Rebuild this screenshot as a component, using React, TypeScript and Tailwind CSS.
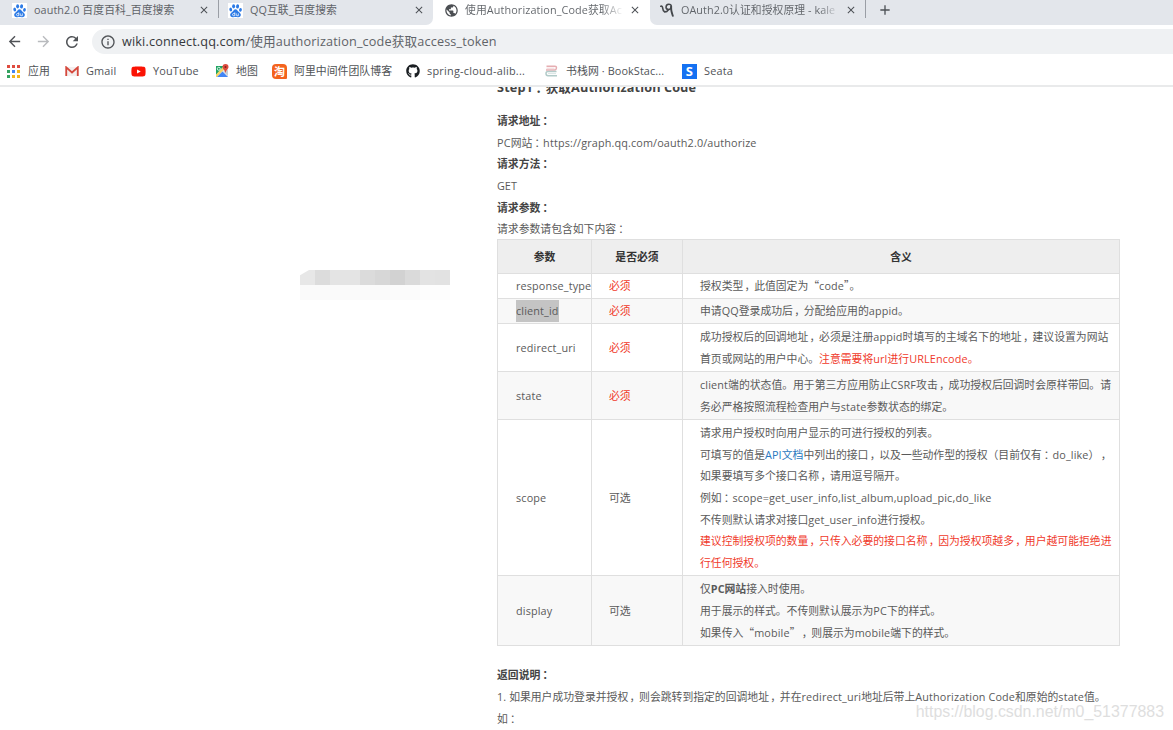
import React from "react";
import { FaGithub, FaYoutube } from "react-icons/fa";
import { MdPublic, MdArrowBack, MdArrowForward, MdRefresh, MdInfoOutline, MdClose, MdAdd } from "react-icons/md";

/*
 * Mixed Chinese and Latin text: full-width colons and commas sit nearer the
 * middle of their em box, curly quotes are full-width, Latin runs are set a little wider.
 */
function T({ children }: { children: string }) {
  return (
    <>
      {children.split(/([：，“”]|[\x21-\x7e]+)/).map((part, i) => {
        if (part === "：") return <span key={i} className="inline-block w-[1em] indent-[0.2em]">{part}</span>;
        if (part === "，") return <span key={i} className="inline-block w-[1em] indent-[0.12em]">{part}</span>;
        if (part === "“" || part === "”") return <span key={i} className="font-['Noto_Sans_CJK_SC',sans-serif]">{part}</span>;
        if (/^[\x21-\x7e]+$/.test(part)) return <span key={i} className="tracking-[0.14px]">{part}</span>;
        return part;
      })}
    </>
  );
}

function TabDivider() {
  return <div className="h-[18px] w-px shrink-0 bg-[#9a9ea5]" />;
}

function Close() {
  return <MdClose className="size-[12px] shrink-0 text-[#4d5156]" />;
}

function PawIcon() {
  return (
    <svg viewBox="0 0 16 16" className="size-[15px] bg-white" fill="#2d7be6">
      <ellipse cx="6" cy="3.500" rx="1.600" ry="2.300" />
      <ellipse cx="10.200" cy="3.600" rx="1.600" ry="2.300" transform="rotate(10 10.200 3.600)" />
      <ellipse cx="2.900" cy="7" rx="1.500" ry="2.100" transform="rotate(-12 2.900 7)" />
      <ellipse cx="13.300" cy="7.300" rx="1.500" ry="2.100" transform="rotate(10 13.300 7.300)" />
      <path d="M8 6.600c1.500 0 2 1.200 3 2.400s2.900 2.100 2.700 3.900c-.2 1.900-1.900 2.400-3.300 2.200-1.600-.3-3.200-.3-4.800 0-1.400.2-3.100-.3-3.300-2.200-.2-1.800 1.700-2.700 2.700-3.900s1.500-2.400 3-2.400z" />
      <path d="M7.200 10v3.600H6q-1.200-.1-1.200-1.200t1.200-1.200h1.200M8.800 11.100v1.900q0 .6.700.6h1.500v-2.500" fill="none" stroke="#fff" strokeWidth=".8" />
    </svg>
  );
}

function GmailIcon() {
  return (
    <svg viewBox="0 0 15 12" className="h-[11px] w-[14px]">
      <path d="M1 1h13v10H1z" fill="#f3eeee" />
      <path d="M1.200 11V1.500L7.500 7l6.300-5.500V11" fill="none" stroke="#d5493d" strokeWidth="2" />
    </svg>
  );
}

function MapsIcon() {
  return (
    <svg viewBox="0 0 14 14" className="size-[14px]">
      <path d="M1 2h12v11H1z" fill="#e8eaed" />
      <path d="M1 2h8L1 11z" fill="#1fa463" />
      <path d="M1 10.500 8.500 2.500 9.500 5 2 13H1z" fill="#f5d565" />
      <path d="M2 13l5.500-5.500L13 13z" fill="#4285f4" />
      <path d="M8.500 7.500 13 12V6z" fill="#c8ccd1" />
      <path d="M10.500 0a3 3 0 0 0-3 3c0 2 2.300 2.700 3 6 .7-3.300 3-4 3-6a3 3 0 0 0-3-3z" fill="#dd4b3e" />
      <circle cx="10.500" cy="3" r="1" fill="#7e2318" />
      <circle cx="3.800" cy="4.800" r="1.500" fill="none" stroke="#fff" strokeWidth=".8" />
    </svg>
  );
}

function TaoIcon() {
  return (
    <span className="flex size-[15px] items-center justify-center rounded-[4px] rounded-br-[1px] bg-[#f4631e] text-[11px] leading-none font-bold text-white">
      淘
    </span>
  );
}

function BookIcon() {
  return (
    <svg viewBox="0 0 13 12" className="h-[12px] w-[13px]" fill="none">
      <path d="M1.500 1.300h8.500q1.500 0 1.500 1.500T10 5H1" stroke="#e6aeb2" strokeWidth="1.500" />
      <path d="M1.500 3.200h8" stroke="#f1d3d5" />
      <path d="M11.500 6.500H3Q1 6.500 1 8.600t2 2.100h9" stroke="#b2cbc9" strokeWidth="1.500" />
      <path d="M3 8.600h8" stroke="#d9e5e4" />
    </svg>
  );
}

function ScriptIcon() {
  return (
    <svg viewBox="0 0 14 14" className="size-[14px]" fill="none" stroke="#44474b" strokeLinecap="round">
      <path d="M.8 3.200q1.700-.4 1.900 2T4.600 8.900Q7 9 8.300 6.800" strokeWidth="1.600" />
      <path d="M6 4.500Q6 1.200 8.700 1.200t2.500 2.600Q11 6.500 8.700 6.500T6 4.500" strokeWidth="1.500" />
      <path d="M11.200 3.500q-.2 3 .4 5.300t1.200 4" strokeWidth="1.900" />
    </svg>
  );
}

function AppsIcon() {
  const colors = [
    "bg-[#df4b3f]", "bg-[#df4b3f]", "bg-[#df4b3f]",
    "bg-[#34a360]", "bg-[#4285f4]", "bg-[#f2b51d]",
    "bg-[#34a360]", "bg-[#f2b51d]", "bg-[#f2b51d]",
  ];
  return (
    <div className="grid w-[13px] grid-cols-3 gap-[2px]">
      {colors.map((c, i) => (
        <span key={i} className={`size-[3px] ${c}`} />
      ))}
    </div>
  );
}

function Bookmark({ icon, label, className }: { icon: React.ReactNode; label: string; className: string }) {
  return (
    <div className={`flex h-full shrink-0 items-center whitespace-nowrap ${className}`}>
      <div className="flex w-[15px] shrink-0 justify-center">{icon}</div>
      <span>{label}</span>
    </div>
  );
}

function Browser() {
  return (
    <header className="shrink-0">
      <div className="flex h-[25px] bg-white text-[10.83px] text-[#5f6368]">
        <div className="flex h-full w-[433px] shrink-0 items-start rounded-br-[7px] bg-[#e3e6eb]">
          <div className="flex h-[20px] w-[218px] items-center pl-[12px]">
            <PawIcon />
            <span className="ml-[7px] w-[164px] tracking-[0.07px] whitespace-nowrap">oauth2.0 百度百科_百度搜索</span>
            <Close />
          </div>
          <TabDivider />
          <div className="flex h-[20px] flex-1 items-center pl-[9px]">
            <PawIcon />
            <span className="ml-[7px] w-[163px] tracking-[0.04px] whitespace-nowrap">QQ互联_百度搜索</span>
            <Close />
          </div>
        </div>
        <div className="flex h-[20px] w-[217px] shrink-0 items-center pl-[11px]">
          <MdPublic className="size-[15px] shrink-0 text-[#4b4e52]" />
          <span className="ml-[6px] w-[159px] overflow-hidden bg-linear-to-r from-[#5f6368] from-85% to-transparent bg-clip-text tracking-[0.1px] whitespace-nowrap text-transparent">
            使用Authorization_Code获取Ac
          </span>
          <span className="ml-[5px]"><Close /></span>
        </div>
        <div className="flex h-full flex-1 items-start rounded-bl-[7px] bg-[#e3e6eb]">
          <div className="flex h-[20px] w-[215px] items-center pl-[10px]">
            <ScriptIcon />
            <span className="ml-[7px] w-[158px] overflow-hidden bg-linear-to-r from-[#5f6368] from-88% to-transparent bg-clip-text tracking-[0.05px] whitespace-nowrap text-transparent">
              OAuth2.0认证和授权原理 - kale
            </span>
            <span className="ml-[6px]"><Close /></span>
          </div>
          <TabDivider />
          <div className="flex h-[20px] items-center pl-[11px]">
            <MdAdd className="size-[16px] text-[#4d5156]" />
          </div>
        </div>
      </div>
      <div className="flex h-[33px] items-center bg-white pl-[6px] text-[#505357]">
        <MdArrowBack className="size-[17px]" />
        <MdArrowForward className="ml-[12px] size-[17px] text-[#b9bbbe]" />
        <MdRefresh className="ml-[11px] size-[18px]" />
        <div className="ml-[11px] flex h-[25px] flex-1 items-center rounded-l-full bg-[#eff1f3] pl-[8px]">
          <MdInfoOutline className="size-[16px]" />
          <span className="ml-[6px] text-[12.67px] tracking-[0.15px] whitespace-nowrap text-[#5f6368]">
            <span className="text-[#35383c]">wiki.connect.qq.com</span>/使用authorization_code获取access_token
          </span>
        </div>
      </div>
      <nav className="flex h-[29px] items-center border-b-2 border-[#e9eaeb] bg-white pb-px text-[10.9px] text-[#505357]">
        <Bookmark icon={<AppsIcon />} label="应用" className="w-[58px] gap-[7px] pl-[6px]" />
        <Bookmark icon={<GmailIcon />} label="Gmail" className="w-[67px] gap-[7px] pl-[6px] tracking-[0.15px]" />
        <Bookmark icon={<FaYoutube className="size-[15px] text-[#fb1304]" />} label="YouTube" className="w-[84px] gap-[7px] pl-[6px] tracking-[0.15px]" />
        <Bookmark icon={<MapsIcon />} label="地图" className="w-[56px] gap-[7px] pl-[5px]" />
        <Bookmark icon={<TaoIcon />} label="阿里中间件团队博客" className="w-[134px] gap-[7px] pl-[7px]" />
        <Bookmark icon={<FaGithub className="size-[14px] text-[#1b1f23]" />} label="spring-cloud-alib..." className="w-[139px] gap-[7px] pl-[6px] tracking-[0.24px]" />
        <Bookmark icon={<BookIcon />} label="书栈网 · BookStac..." className="w-[138px] gap-[7px] pl-[6px] tracking-[0.08px]" />
        <Bookmark
          icon={<span className="flex size-[15px] items-center justify-center bg-[#1471f2] text-[13px] leading-none font-bold text-white">S</span>}
          label="Seata"
          className="gap-[7px] pl-[6px] tracking-[0.2px]"
        />
      </nav>
    </header>
  );
}

const red = "text-[#f03a2b]";

const rows: { name: string; need: string; height: string; desc: React.ReactNode[] }[] = [
  { name: "response_type", need: "必须", height: "h-[25px]", desc: [<T>授权类型，此值固定为“code”。</T>] },
  { name: "client_id", need: "必须", height: "h-[25px]", desc: [<T>申请QQ登录成功后，分配给应用的appid。</T>] },
  {
    name: "redirect_uri", need: "必须", height: "h-[48px]",
    desc: [
      <T>成功授权后的回调地址，必须是注册appid时填写的主域名下的地址，建议设置为网站</T>,
      <>首页或网站的用户中心。<span className={red}><T>注意需要将url进行URLEncode。</T></span></>,
    ],
  },
  {
    name: "state", need: "必须", height: "h-[48px]",
    desc: [
      <T>client端的状态值。用于第三方应用防止CSRF攻击，成功授权后回调时会原样带回。请</T>,
      <T>务必严格按照流程检查用户与state参数状态的绑定。</T>,
    ],
  },
  {
    name: "scope", need: "可选", height: "h-[156px]",
    desc: [
      <T>请求用户授权时向用户显示的可进行授权的列表。</T>,
      <>可填写的值是<span className="text-[#2878c0]"><T>API文档</T></span><T>中列出的接口，以及一些动作型的授权（目前仅有：do_like），</T></>,
      <T>如果要填写多个接口名称，请用逗号隔开。</T>,
      <T>例如：scope=get_user_info,list_album,upload_pic,do_like</T>,
      <T>不传则默认请求对接口get_user_info进行授权。</T>,
      <span className={red}><T>建议控制授权项的数量，只传入必要的接口名称，因为授权项越多，用户越可能拒绝进</T></span>,
      <span className={red}>行任何授权。</span>,
    ],
  },
  {
    name: "display", need: "可选", height: "h-[70px]",
    desc: [
      <>仅<b>PC网站</b>接入时使用。</>,
      <T>用于展示的样式。不传则默认展示为PC下的样式。</T>,
      <T>如果传入“mobile”，则展示为mobile端下的样式。</T>,
    ],
  },
];

function ParamTable() {
  return (
    <div className="w-[623px] border-t border-l border-[#dfdfdf]">
      <div className="grid h-[34px] grid-cols-[94px_91px_1fr] bg-[#eeeeee] text-center leading-[33px] font-bold text-[#333]">
        <div className="border-r border-b border-[#dfdfdf]">参数</div>
        <div className="border-r border-b border-[#dfdfdf]">是否必须</div>
        <div className="border-r border-b border-[#dfdfdf]">含义</div>
      </div>
      {rows.map((row, i) => (
        <div
          key={row.name}
          className={`grid grid-cols-[94px_91px_1fr] ${row.height} ${i % 2 ? "bg-[#f8f8f8]" : "bg-white"}`}
        >
          <div className="flex items-center border-r border-b border-[#dfdfdf] pl-[18px] whitespace-nowrap">
            <span className={row.name === "client_id" ? "bg-[#c4c4c4]" : ""}><T>{row.name}</T></span>
          </div>
          <div className={`flex items-center border-r border-b border-[#dfdfdf] pl-[17px] ${row.need === "必须" ? red : ""}`}>
            {row.need}
          </div>
          <div className="flex flex-col justify-center border-r border-b border-[#dfdfdf] pl-[17px]">
            {row.desc.map((line, j) => (
              <div key={j} className="whitespace-nowrap">{line}</div>
            ))}
          </div>
        </div>
      ))}
    </div>
  );
}

const mosaic = [
  "bg-[#e7e7e7] [clip-path:polygon(0_35%,60%_0,100%_0,100%_100%,0_100%)]",
  "bg-[#dcdcdc]", "bg-[#e4e4e4]", "bg-[#e4e4e4]", "bg-[#dbdbdb]",
  "bg-[#d7d7d7]", "bg-[#d2d2d2]", "bg-[#dadada]", "bg-[#e3e3e3]", "bg-[#e2e2e2]",
];

export default function App() {
  return (
    <div className="relative flex h-[730px] w-[1173px] flex-col overflow-hidden bg-white font-['Open_Sans','Noto_Sans_CJK_SC',sans-serif]">
      <Browser />
      <main className="flex min-h-0 flex-1 overflow-hidden text-[10.83px] leading-[21.66px] text-[#5a5a5a]">
        <div className="w-[497px] shrink-0 pt-[183px] pl-[300px]">
          <div className="flex">
            {mosaic.map((c, i) => (
              <span key={i} className={`h-[15px] w-[15px] ${c}`} />
            ))}
          </div>
          <div className="flex h-[15px] w-[150px]">
            <span className="w-[90px] bg-[#fafafa]" />
            <span className="w-[30px] bg-[#fbfbfb]" />
            <span className="w-[30px] bg-[#fdfdfd]" />
          </div>
        </div>
        <div className="w-[623px] shrink-0 whitespace-nowrap">
          <h2 className="-mt-[10px] mb-[11px] h-[22px] text-[12.7px] font-bold text-[#444]"><T>Step1：获取Authorization Code</T></h2>
          <p className="font-bold text-[#444]"><T>请求地址：</T></p>
          <p><T>PC网站：https://graph.qq.com/oauth2.0/authorize</T></p>
          <p className="font-bold text-[#444]"><T>请求方法：</T></p>
          <p>GET</p>
          <p className="font-bold text-[#444]"><T>请求参数：</T></p>
          <p className="h-[21px]"><T>请求参数请包含如下内容：</T></p>
          <ParamTable />
          <p className="mt-[18px] font-bold text-[#444]"><T>返回说明：</T></p>
          <p><T>1. 如果用户成功登录并授权，则会跳转到指定的回调地址，并在redirect_uri地址后带上Authorization Code和原始的state值。</T></p>
          <p><T>如：</T></p>
        </div>
      </main>
      <div className="absolute right-[9px] bottom-[8px] font-['Liberation_Sans',sans-serif] text-[15.9px] leading-[20px] text-[#dedede]">
        https://blog.csdn.net/m0_51377883
      </div>
    </div>
  );
}
